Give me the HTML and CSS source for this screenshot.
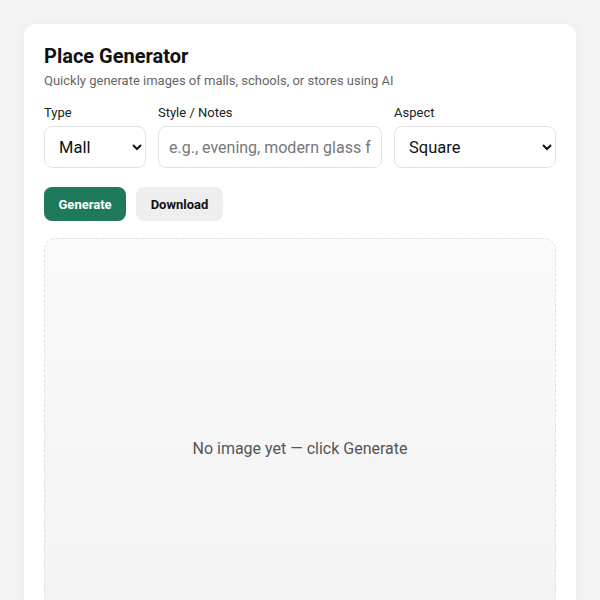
FILE: index.html
```html
<!DOCTYPE html>
<html lang="en">
<head>
<meta charset="utf-8">
<title>Place Generator</title>
<link rel="stylesheet" href="styles.css">
</head>
<body>
<div class="page">
  <main class="card">
    <h1 class="title">Place Generator</h1>
    <p class="subtitle">Quickly generate images of malls, schools, or stores using AI</p>
    <div class="controls">
      <label class="field field-type">
        <span class="label">Type</span>
        <select class="control">
          <option>Mall</option>
          <option>School</option>
          <option>Store</option>
        </select>
      </label>
      <label class="field field-notes">
        <span class="label">Style / Notes</span>
        <input class="control" type="text" placeholder="e.g., evening, modern glass facade">
      </label>
      <label class="field field-aspect">
        <span class="label">Aspect</span>
        <select class="control">
          <option>Square</option>
          <option>Landscape</option>
          <option>Portrait</option>
        </select>
      </label>
    </div>
    <div class="actions">
      <button class="btn btn-primary">Generate</button>
      <button class="btn btn-secondary">Download</button>
    </div>
    <div class="preview">
      <span class="empty">No image yet — click Generate</span>
    </div>
  </main>
</div>
</body>
</html>
```
FILE: styles.css
```css
* { box-sizing: border-box; }
html, body { margin: 0; padding: 0; }
body {
  background: #f3f3f3;
  font-family: Roboto, "Liberation Sans", Arial, sans-serif;
  color: #111;
}
.page {
  padding: 24px;
}
.card {
  background: #fff;
  border-radius: 12px;
  padding: 20px;
  box-shadow: 0 2px 12px rgba(0,0,0,0.05);
}
.title {
  margin: 0;
  font-size: 20px;
  line-height: 24px;
  font-weight: 700;
  color: #111;
}
.subtitle {
  margin: 4px 0 0;
  font-size: 13px;
  line-height: 18px;
  color: #666;
}
.controls {
  display: flex;
  gap: 12px;
  margin-top: 14px;
}
.field {
  display: flex;
  flex-direction: column;
  gap: 4px;
}
.field-type { width: 102px; }
.field-notes { width: 224px; }
.field-aspect { flex: 1; }
.label {
  font-size: 13px;
  line-height: 18px;
  color: #222;
}
.control {
  height: 42px;
  border: 1px solid #e3e3e3;
  border-radius: 8px;
  background: #fff;
  font-family: Roboto, "Liberation Sans", Arial, sans-serif;
  font-size: 16px;
  color: #111;
  padding: 0 10px;
  width: 100%;
  outline: none;
}
select.control {
  padding: 0 6px 0 10px;
  font-size: 16.5px;
}
.control::placeholder { color: #777; }
.actions {
  display: flex;
  gap: 10px;
  margin-top: 19px;
}
.btn {
  height: 34px;
  border: none;
  border-radius: 8px;
  font-family: Roboto, "Liberation Sans", Arial, sans-serif;
  font-size: 13px;
  font-weight: 700;
  padding: 0 14.5px;
}
.btn-primary {
  background: #1f7a5c;
  color: #fff;
}
.btn-secondary {
  background: #eeeeee;
  color: #111;
}
.preview {
  margin-top: 17px;
  height: 420px;
  border: 1px dashed #e2e2e2;
  border-radius: 12px;
  background: linear-gradient(#fafafa, #f2f2f2);
  display: flex;
  align-items: center;
  justify-content: center;
}
.empty {
  font-size: 16px;
  color: #555;
}
```
